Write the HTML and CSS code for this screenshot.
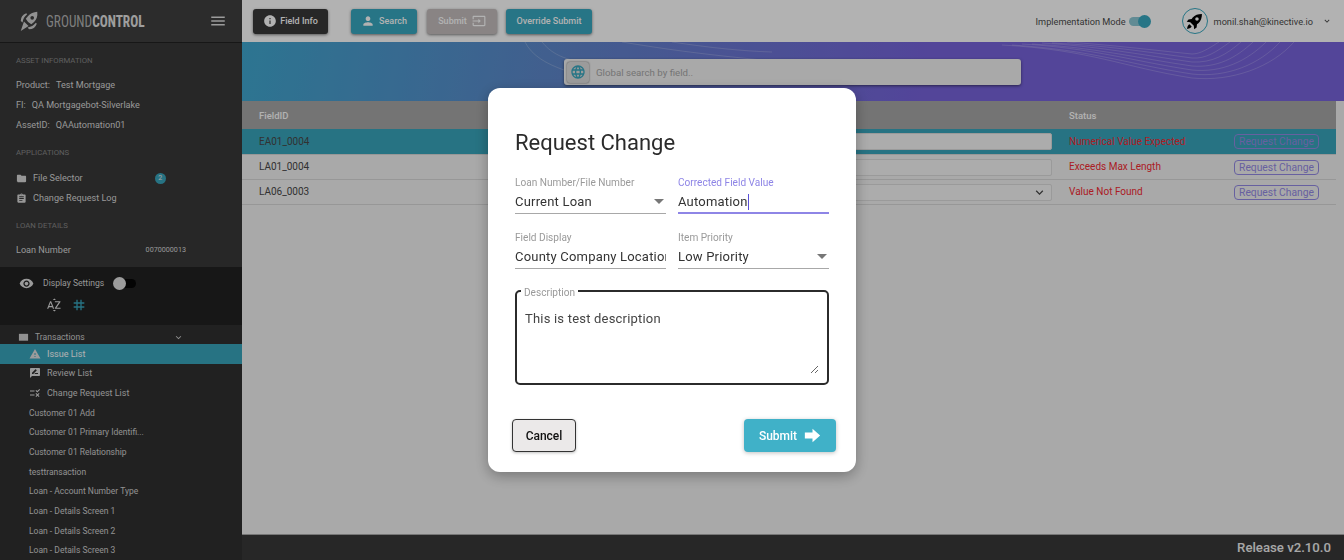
FILE: index.html
```html
<!DOCTYPE html>
<html lang="en">
<head>
    <meta charset="UTF-8">
    <title>GroundControl</title>
    <link rel="stylesheet" href="styles.css">
</head>
<body>
    <div class="app">
        <aside class="sidebar">
            <div class="brand">
                <svg class="brand-logo" viewBox="0 0 24 24"><path d="M21 2c-4 .3-7.500 1.800-10 4.500L8.500 9.500 11 13l3.500 2.500 3-2.500C20.200 10.500 21.700 7 21 2zM15.500 6.500a2 2 0 1 1 0 4 2 2 0 0 1 0-4z"/><path d="M9 3.500A9 9 0 0 0 3 12l2 1.500C5.500 9.500 7 7 10 4.500zM20.500 15a9 9 0 0 1-8.500 6l-1.500-2c4-.5 6.500-2 9-5zM6.500 12.500l5 5L3 23z"/></svg>
                <span class="brand-name">GROUND<b>CONTROL</b></span>
                <svg class="menu-icon" viewBox="0 0 24 24"><path d="M3 18h18v-2H3v2zm0-5h18v-2H3v2zm0-7v2h18V6H3z"/></svg>
            </div>

            <div class="side-info">
                <h4>Asset Information</h4>
                <p><span>Product:</span> Test Mortgage</p>
                <p><span>FI:</span> QA Mortgagebot-Silverlake</p>
                <p><span>AssetID:</span> QAAutomation01</p>

                <h4>Applications</h4>
                <p class="with-icon">
                    <svg viewBox="0 0 24 24"><path d="M10 4H4c-1.100 0-1.990.9-1.990 2L2 18c0 1.100.9 2 2 2h16c1.100 0 2-.9 2-2V8c0-1.100-.9-2-2-2h-8l-2-2z"/></svg>
                    File Selector <i class="count">2</i>
                </p>
                <p class="with-icon">
                    <svg viewBox="0 0 24 24"><path d="M19 3h-4.180C14.400 1.840 13.300 1 12 1c-1.300 0-2.400.84-2.820 2H5c-1.100 0-2 .9-2 2v14c0 1.100.9 2 2 2h14c1.100 0 2-.9 2-2V5c0-1.100-.9-2-2-2zm-7 0c.55 0 1 .45 1 1s-.45 1-1 1-1-.45-1-1 .45-1 1-1zm2 14H7v-2h7v2zm3-4H7v-2h10v2zm0-4H7V7h10v2z"/></svg>
                    Change Request Log
                </p>

                <h4>Loan Details</h4>
                <p class="loan-row">Loan Number <small>0070000013</small></p>
            </div>

            <div class="display-settings">
                <div class="display-row">
                    <svg viewBox="0 0 24 24"><path d="M12 4.500C7 4.500 2.730 7.610 1 12c1.730 4.390 6 7.500 11 7.500s9.270-3.110 11-7.500c-1.730-4.390-6-7.500-11-7.500zM12 17c-2.760 0-5-2.240-5-5s2.240-5 5-5 5 2.240 5 5-2.240 5-5 5zm0-8c-1.660 0-3 1.340-3 3s1.340 3 3 3 3-1.340 3-3-1.340-3-3-3z"/></svg>
                    <span>Display Settings</span>
                    <div class="switch-off"></div>
                </div>
                <div class="sort-row">
                    <svg class="sort-az" viewBox="0 0 24 24"><path d="M14.940 4.660h-4.720l2.360-2.360zm-4.690 14.710h4.660l-2.330 2.330zM6.100 6.270L1.600 17.730h1.840l.92-2.450h5.110l.92 2.450h1.840L7.740 6.270H6.100zm-1.130 7.370l1.940-5.180 1.940 5.180H4.970zm10.760 2.500h6.120v1.590h-8.530v-1.290l5.920-8.560h-5.880v-1.600h8.300v1.260l-5.930 8.600z"/></svg>
                    <svg class="sort-tag" viewBox="0 0 24 24"><path d="M20 10V8h-4V4h-2v4h-4V4H8v4H4v2h4v4H4v2h4v4h2v-4h4v4h2v-4h4v-2h-4v-4h4zm-6 4h-4v-4h4v4z"/></svg>
                </div>
            </div>

            <nav class="tx-nav">
                <div class="tx-head">
                    <svg viewBox="0 0 24 24"><path d="M2 4h20v15H2z"/></svg>
                    <span>Transactions</span>
                    <svg class="tx-chevron" viewBox="0 0 24 24"><path d="M7.410 8.590L12 13.170l4.590-4.580L18 10l-6 6-6-6z"/></svg>
                </div>
                <a class="tx-item icon-item active">
                    <svg viewBox="0 0 24 24"><path d="M1 21h22L12 2 1 21zm12-3h-2v-2h2v2zm0-4h-2v-4h2v4z"/></svg>
                    Issue List
                </a>
                <a class="tx-item icon-item">
                    <svg viewBox="0 0 24 24"><path d="M20 2H4c-1.100 0-2 .9-2 2v18l4-4h14c1.100 0 2-.9 2-2V4c0-1.100-.9-2-2-2zM6 14v-2.470l6.880-6.880c.2-.2.51-.2.71 0l1.770 1.770c.2.2.2.51 0 .71L8.470 14H6zm12 0h-7.500l2-2H18v2z"/></svg>
                    Review List
                </a>
                <a class="tx-item icon-item">
                    <svg viewBox="0 0 24 24"><path d="M16.540 11L13 7.460l1.410-1.410 2.120 2.120 4.240-4.240 1.410 1.410L16.540 11zM11 7H2v2h9V7zm10 6.410L19.590 12 17 14.590 14.410 12 13 13.410 15.590 16 13 18.590 14.410 20 17 17.410 19.590 20 21 18.590 18.410 16 21 13.410zM11 15H2v2h9v-2z"/></svg>
                    Change Request List
                </a>
                <a class="tx-item">Customer 01 Add</a>
                <a class="tx-item">Customer 01 Primary Identifi...</a>
                <a class="tx-item">Customer 01 Relationship</a>
                <a class="tx-item">testtransaction</a>
                <a class="tx-item">Loan - Account Number Type</a>
                <a class="tx-item">Loan - Details Screen 1</a>
                <a class="tx-item">Loan - Details Screen 2</a>
                <a class="tx-item">Loan - Details Screen 3</a>
            </nav>
        </aside>

        <main class="main">
            <header class="topbar">
                <button class="btn btn-dark field-info">
                    <svg viewBox="0 0 24 24"><path d="M12 2C6.480 2 2 6.480 2 12s4.480 10 10 10 10-4.480 10-10S17.520 2 12 2zm1 15h-2v-6h2v6zm0-8h-2V7h2v2z"/></svg>
                    Field Info
                </button>
                <button class="btn btn-teal search-btn">
                    <svg viewBox="0 0 24 24"><path d="M12 12c2.210 0 4-1.790 4-4s-1.790-4-4-4-4 1.790-4 4 1.790 4 4 4zm0 2c-2.670 0-8 1.340-8 4v2h16v-2c0-2.660-5.330-4-8-4z"/></svg>
                    Search
                </button>
                <button class="btn btn-grey submit-btn">
                    Submit
                    <svg viewBox="0 0 24 24"><path d="M21 3.010H3c-1.100 0-2 .9-2 2V9h2V4.990h18v14.030H3V15H1v4.010c0 1.100.9 1.980 2 1.980h18c1.100 0 2-.88 2-1.980v-14c0-1.110-.9-2-2-2zM11 16l4-4-4-4v3H1v2h10v3z"/></svg>
                </button>
                <button class="btn btn-teal override-btn">Override Submit</button>

                <div class="top-right">
                    <span class="impl-label">Implementation Mode</span>
                    <div class="switch-on"></div>
                    <div class="avatar">
                        <svg viewBox="0 0 24 24"><path d="M22.500 1.500c-5.500 0-10 1.500-13 5L8 8.500 3.500 9 1 12.500l5 .5 5 5 .5 5 3.500-2.500.5-4.500 2-1.500c3.500-3 5-7.500 5-13zM15.500 6a2.500 2.500 0 1 1 0 5 2.500 2.500 0 0 1 0-5zM5 16c-1.800.6-3 2.500-3.500 6.500 4-.5 5.900-1.700 6.500-3.500z"/></svg>
                    </div>
                    <span class="user-mail">monil.shah@kinective.io</span>
                    <svg class="user-chevron" viewBox="0 0 24 24"><path d="M7.410 8.590L12 13.170l4.590-4.580L18 10l-6 6-6-6z"/></svg>
                </div>
            </header>

            <section class="banner">
                <svg class="banner-waves" viewBox="0 0 1102 59">
                    <path d="M283 0C290 14 305 22 322 28"/>
                    <path d="M300 0C308 10 318 15 330 18"/>
                    <path d="M380 0C440 10 480 14 520 18"/>
                    <path d="M430 0C470 6 500 9 530 10"/>
                    <path d="M760 3C850 8 880 25 950 36C990 40 1030 25 1052 0"/>
                    <path d="M770 3C850 8 885 22 950 32C985 36 1018 22 1038 0"/>
                    <path d="M780 2C850 6 890 19 950 28C980 31 1005 19 1024 0"/>
                    <path d="M790 2C850 5 895 16 950 24C975 26 994 16 1011 0"/>
                    <path d="M800 1C855 4 900 13 950 20C970 21 984 13 999 0"/>
                    <path d="M810 1C860 3 905 10 950 16C964 17 974 10 988 0"/>
                    <path d="M825 0C870 3 910 8 950 12C958 12 966 7 977 0"/>
                </svg>
                <div class="global-search">
                    <span class="globe-btn">
                        <svg viewBox="0 0 24 24"><path d="M11.990 2C6.470 2 2 6.480 2 12s4.470 10 9.990 10C17.520 22 22 17.520 22 12S17.520 2 11.990 2zm6.930 6h-2.950c-.32-1.250-.78-2.450-1.380-3.560 1.840.63 3.370 1.910 4.330 3.560zM12 4.040c.83 1.200 1.480 2.530 1.910 3.960h-3.820c.43-1.430 1.080-2.760 1.910-3.960zM4.260 14C4.100 13.360 4 12.690 4 12s.1-1.360.26-2h3.380c-.08.66-.14 1.320-.14 2s.06 1.340.14 2H4.260zm.82 2h2.950c.32 1.250.78 2.450 1.380 3.560-1.840-.63-3.370-1.900-4.330-3.560zm2.950-8H5.080c.96-1.660 2.490-2.930 4.330-3.560C8.810 5.550 8.350 6.750 8.030 8zM12 19.960c-.83-1.200-1.480-2.530-1.910-3.960h3.820c-.43 1.430-1.080 2.760-1.910 3.960zM14.340 14H9.660c-.09-.66-.16-1.320-.16-2s.07-1.350.16-2h4.680c.09.65.16 1.320.16 2s-.07 1.340-.16 2zm.25 5.560c.6-1.110 1.060-2.310 1.380-3.560h2.950c-.96 1.650-2.490 2.930-4.330 3.560zM16.360 14c.08-.66.14-1.320.14-2s-.06-1.340-.14-2h3.380c.16.64.26 1.310.26 2s-.1 1.360-.26 2h-3.380z"/></svg>
                    </span>
                    <span class="search-hint">Global search by field..</span>
                </div>
            </section>

            <section class="issue-table">
                <div class="table-row table-head">
                    <span>FieldID</span>
                    <span></span>
                    <span>Status</span>
                    <span></span>
                </div>
                <div class="table-row selected">
                    <span>EA01_0004</span>
                    <div class="value-box"></div>
                    <span class="status-text">Numerical Value Expected</span>
                    <span class="request-link">Request Change</span>
                </div>
                <div class="table-row">
                    <span>LA01_0004</span>
                    <div class="value-box"></div>
                    <span class="status-text">Exceeds Max Length</span>
                    <span class="request-link">Request Change</span>
                </div>
                <div class="table-row">
                    <span>LA06_0003</span>
                    <div class="value-box">
                        <svg viewBox="0 0 24 24"><path d="M7.410 8.590L12 13.170l4.590-4.580L18 10l-6 6-6-6z"/></svg>
                    </div>
                    <span class="status-text">Value Not Found</span>
                    <span class="request-link">Request Change</span>
                </div>
            </section>

            <footer class="release-bar">Release v2.10.0</footer>
        </main>
    </div>

    <div class="overlay">
        <form class="modal">
            <h2>Request Change</h2>
            <div class="form-grid">
                <div class="field">
                    <label>Loan Number/File Number</label>
                    <div class="field-value">Current Loan <i class="caret"></i></div>
                </div>
                <div class="field focused">
                    <label>Corrected Field Value</label>
                    <div class="field-value"><span class="typed">Automation</span></div>
                </div>
                <div class="field">
                    <label>Field Display</label>
                    <input class="field-value field-input" type="text" value="County Company Location" readonly>
                </div>
                <div class="field">
                    <label>Item Priority</label>
                    <div class="field-value">Low Priority <i class="caret"></i></div>
                </div>
            </div>
            <fieldset class="description">
                <legend>Description</legend>
                <textarea rows="3">This is test description</textarea>
            </fieldset>
            <div class="modal-actions">
                <button type="button" class="btn-cancel">Cancel</button>
                <button type="button" class="btn-submit">
                    Submit
                    <svg viewBox="0 0 20 20"><path d="M1 6.500h9V2l9 8-9 8v-4.500H1z"/></svg>
                </button>
            </div>
        </form>
    </div>
</body>
</html>
```
FILE: styles.css
```css
* {
    box-sizing: border-box;
}

body {
    margin: 0;
    font-family: Roboto, "Liberation Sans", sans-serif;
    background-color: #f2f2f2;
    color: #484848;
    overflow: hidden;
}

svg {
    fill: currentColor;
    flex: none;
}

.app {
    display: flex;
    width: 1344px;
    height: 560px;
}

/* sidebar */
.sidebar {
    width: 242px;
    flex: none;
    height: 560px;
    overflow: hidden;
    background-color: #393939;
    color: #d8d8d8;
    font-size: 9.100px;
}

.brand {
    display: flex;
    align-items: center;
    height: 43px;
    padding-left: 18px;
    border-bottom: 1px solid #222;
    background-color: #3f3f3f;
}

.brand-logo {
    width: 22px;
    height: 22px;
    color: #d0d0d0;
}

.brand-name {
    display: inline-block;
    width: 111px;
    margin-left: 6px;
    font-family: "Liberation Sans Narrow", "Roboto Condensed", Roboto, sans-serif;
    font-size: 16px;
    color: #b5b5b5;
    white-space: nowrap;
    transform: scaleX(0.83);
    transform-origin: left;
}

.brand-name b {
    color: #e2e2e2;
}

.menu-icon {
    width: 18px;
    height: 18px;
    margin-left: 52px;
    color: #e0e0e0;
}

.side-info {
    height: 224px;
    padding: 12px 16px 0;
}

.side-info h4 {
    margin: 0;
    height: 12px;
    line-height: 12px;
    font-size: 7.800px;
    font-weight: 400;
    text-transform: uppercase;
    color: #888;
}

.side-info p {
    display: flex;
    align-items: center;
    margin: 0;
    height: 20px;
    line-height: 20px;
}

.side-info h4 + p {
    margin-top: 8px;
}

.side-info h4 + .with-icon {
    margin-top: 9px;
}

.side-info p + h4 {
    margin-top: 12px;
}

.side-info p span {
    margin-right: 6px;
}

.with-icon svg {
    width: 11px;
    height: 11px;
    margin-right: 6px;
}

.count {
    width: 11px;
    height: 11px;
    margin-left: 72px;
    border-radius: 50%;
    background-color: #38a5bc;
    color: #eee;
    font-size: 7px;
    font-style: normal;
    line-height: 11px;
    text-align: center;
}

.side-info .loan-row {
    margin-top: 8px;
    justify-content: space-between;
    padding-right: 40px;
}

.loan-row small {
    font-size: 7.200px;
}

.display-settings {
    height: 58px;
    background-color: #212121;
    padding: 6px 0 0 19px;
}

.display-row {
    display: flex;
    align-items: center;
    height: 20px;
}

.display-row svg {
    width: 15px;
    height: 15px;
    color: #dedede;
}

.display-row span {
    margin-left: 9px;
    font-size: 8.600px;
}

.switch-off {
    position: relative;
    width: 19px;
    height: 9px;
    margin-left: 13px;
    border-radius: 5px;
    background-color: #060606;
}

.switch-off::before {
    content: "";
    position: absolute;
    left: -4px;
    top: -2px;
    width: 13px;
    height: 13px;
    border-radius: 50%;
    background-color: #e0e0e0;
}

.sort-row {
    display: flex;
    align-items: center;
    gap: 9px;
    margin: 4px 0 0 27px;
}

.sort-row svg {
    width: 16px;
    height: 16px;
}

.sort-az {
    color: #dedede;
}

.sort-tag {
    color: #38a5bc;
}

.tx-nav {
    background-color: #303030;
}

.tx-head {
    display: flex;
    align-items: center;
    height: 19px;
    padding: 5px 0 0 18px;
    font-size: 8.600px;
    color: #cfcfcf;
}

.tx-head svg {
    width: 11px;
    height: 11px;
}

.tx-head span {
    margin-left: 6px;
    width: 138px;
}

.tx-item {
    display: flex;
    align-items: center;
    height: 19.650px;
    padding-left: 29px;
    font-size: 8.500px;
    color: #d0d0d0;
}

.tx-item svg {
    width: 12px;
    height: 12px;
    margin-right: 6px;
    color: #dedede;
}

.tx-item.icon-item {
    font-size: 9px;
}

.tx-item.active {
    background-color: #38a5bc;
    color: #fff;
}

/* main area */
.main {
    flex: 1;
    display: flex;
    flex-direction: column;
    height: 560px;
    min-width: 0;
}

.topbar {
    display: flex;
    align-items: center;
    height: 42px;
    flex: none;
    padding-left: 11px;
    background-color: #fff;
}

.btn {
    display: flex;
    align-items: center;
    justify-content: center;
    height: 25px;
    padding: 0;
    border: 0;
    border-radius: 3px;
    font-family: inherit;
    font-size: 9px;
    font-weight: 500;
    color: #fff;
    box-shadow: 0 1px 3px rgba(0, 0, 0, 0.5);
}

.btn svg {
    width: 14px;
    height: 14px;
}

.btn-dark {
    background-color: #383838;
}

.btn-teal {
    background-color: #38a8c0;
}

.btn-grey {
    background-color: #c5bebe;
}

.field-info {
    width: 75px;
    gap: 3px;
}

.search-btn {
    width: 66px;
    margin-left: 23px;
    gap: 4px;
}

.submit-btn {
    width: 70px;
    margin-left: 10px;
    gap: 5px;
}

.override-btn {
    width: 86px;
    margin-left: 9px;
}

.top-right {
    display: flex;
    align-items: center;
    margin-left: auto;
    padding-right: 12px;
    color: #4c4c4c;
    font-size: 9.200px;
}

.switch-on {
    position: relative;
    width: 20px;
    height: 9px;
    margin-left: 3px;
    border-radius: 5px;
    background-color: #8cc8d4;
}

.switch-on::after {
    content: "";
    position: absolute;
    right: -2px;
    top: -2px;
    width: 13px;
    height: 13px;
    border-radius: 50%;
    background-color: #38a8c0;
}

.avatar {
    display: flex;
    align-items: center;
    justify-content: center;
    width: 26px;
    height: 26px;
    margin-left: 33px;
    border: 1px solid #38a8c0;
    border-radius: 50%;
    color: #000;
}

.avatar svg {
    width: 17px;
    height: 17px;
}

.user-mail {
    margin-left: 6px;
}

.user-chevron {
    width: 10px;
    height: 10px;
    margin-left: 9px;
}

.banner {
    position: relative;
    display: flex;
    justify-content: center;
    height: 59px;
    flex: none;
    padding-top: 17px;
    background: linear-gradient(100deg, #40a8d0 0%, #6086cc 30%, #7763dc 62%, #7763dc 100%);
    overflow: hidden;
}

.banner-waves {
    position: absolute;
    left: 0;
    top: 0;
    width: 1102px;
    height: 59px;
    fill: none;
    stroke: rgba(255, 255, 255, 0.2);
    stroke-width: 1;
}

.global-search {
    position: relative;
    display: flex;
    align-items: center;
    width: 457px;
    height: 26px;
    margin-right: 1px;
    padding-left: 3px;
    border-radius: 3px;
    background-color: #f2f2f2;
    box-shadow: 0 1px 3px rgba(0, 0, 0, 0.5);
}

.globe-btn {
    display: flex;
    align-items: center;
    justify-content: center;
    width: 22px;
    height: 21px;
    border-radius: 3px;
    background-color: #dedede;
    box-shadow: 0 0 2px rgba(0, 0, 0, 0.6);
    color: #38a8c0;
}

.globe-btn svg {
    width: 16px;
    height: 16px;
}

.search-hint {
    margin-left: 7px;
    font-size: 9.700px;
    color: #a8a8a8;
}

.issue-table {
    flex: 1;
    margin-right: 8px;
    font-size: 10px;
}

.table-row {
    display: grid;
    grid-template-columns: 448px 362px 165px 1fr;
    align-items: center;
    height: 25px;
    padding-left: 17px;
    border-bottom: 1px solid #d8d8d8;
}

.table-row > span {
    padding-bottom: 2px;
}

.table-head {
    height: 28px;
    background-color: #a7a7a7;
    color: #fff;
    font-size: 9.500px;
    font-weight: 500;
    border: 0;
}

.table-head > span,
.table-row.selected > span {
    padding-bottom: 0;
}

.table-row.selected {
    height: 26px;
    background-color: #38a5bc;
}

.value-box {
    display: flex;
    align-items: center;
    justify-content: flex-end;
    height: 17px;
    margin-right: 17px;
    padding-right: 4px;
    border: 1px solid #ddd;
    border-radius: 2px;
    background-color: #f6f6f6;
}

.value-box svg {
    width: 15px;
    height: 15px;
}

.status-text {
    color: #f52a33;
}

.table-row > .request-link {
    width: 85px;
    height: 15px;
    padding: 0;
    border: 1px solid #948ae6;
    border-radius: 4px;
    color: #948ae6;
    font-size: 10.300px;
    line-height: 13px;
    text-align: center;
}

.release-bar {
    height: 26px;
    flex: none;
    padding-right: 13px;
    border-top: 1px solid #aaa;
    background-color: #393939;
    color: #f0f0f0;
    font-size: 13.200px;
    font-weight: 500;
    line-height: 25px;
    text-align: right;
}

/* dialog */
.overlay {
    position: fixed;
    inset: 0;
    background-color: rgba(0, 0, 0, 0.3);
}

.modal {
    position: absolute;
    left: 488px;
    top: 88px;
    width: 368px;
    height: 384px;
    padding: 42px 27px 0;
    border-radius: 12px;
    background-color: #fff;
    box-shadow: 0 4px 14px rgba(0, 0, 0, 0.3);
}

.modal h2 {
    margin: 0 0 21px;
    height: 25px;
    font-size: 22px;
    font-weight: 400;
    line-height: 25px;
    color: #2b2b2b;
}

.form-grid {
    display: grid;
    grid-template-columns: 151px 151px;
    column-gap: 12px;
    row-gap: 17px;
}

.field label {
    display: block;
    height: 14px;
    font-size: 10.100px;
    line-height: 14px;
    color: #9a9a9a;
}

.field-value {
    display: flex;
    align-items: center;
    justify-content: space-between;
    height: 24px;
    padding-bottom: 0;
    border-bottom: 1px solid #a8a8a8;
    font-size: 13px;
    letter-spacing: 0.2px;
    color: #333;
    white-space: nowrap;
    overflow: hidden;
}

.field-input {
    display: block;
    width: 100%;
    padding: 0;
    border-width: 0 0 1px;
    outline: 0;
    font-family: inherit;
    background: none;
}

.field.focused label {
    color: #8e85e6;
}

.field.focused .field-value {
    padding-top: 1px;
    border-bottom: 2px solid #8e85e6;
}

.typed {
    border-right: 1px solid #5a4fd8;
    line-height: 16px;
}

.caret {
    width: 0;
    height: 0;
    margin-right: 2px;
    border-left: 5px solid transparent;
    border-right: 5px solid transparent;
    border-top: 5px solid #777;
}

.description {
    margin: 14px 0 0;
    padding: 0 8px;
    height: 102px;
    width: 314px;
    border: 2px solid #2b2b2b;
    border-radius: 5px;
}

.description legend {
    padding: 4px 3px 0;
    margin-left: -4px;
    font-size: 10.100px;
    line-height: 12px;
    color: #9a9a9a;
}

.description textarea {
    display: block;
    width: 100%;
    height: 75px;
    padding: 12px 0 0;
    border: 0;
    outline: 0;
    font-family: inherit;
    font-size: 13px;
    letter-spacing: 0.2px;
    color: #444;
    resize: vertical;
}

.modal-actions {
    display: flex;
    justify-content: space-between;
    margin: 34px -7px 0 -3px;
}

.btn-cancel,
.btn-submit {
    height: 33px;
    border-radius: 4px;
    font-family: inherit;
    font-size: 12px;
    font-weight: 500;
}

.btn-cancel {
    width: 64px;
    border: 1px solid #333;
    background-color: #ebe9e9;
    color: #111;
    box-shadow: 0 1px 3px rgba(0, 0, 0, 0.25);
}

.btn-submit {
    display: flex;
    align-items: center;
    justify-content: center;
    gap: 7px;
    width: 92px;
    border: 0;
    background-color: #40b1c8;
    color: #fff;
    box-shadow: 0 1px 4px rgba(0, 0, 0, 0.25);
}

.btn-submit svg {
    width: 17px;
    height: 17px;
}
```
